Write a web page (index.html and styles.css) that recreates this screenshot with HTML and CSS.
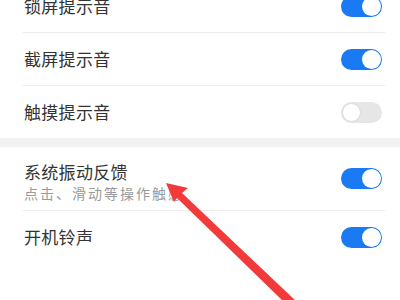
FILE: index.html
```html
<!DOCTYPE html>
<html lang="zh">
<head>
<meta charset="utf-8">
<link rel="stylesheet" href="styles.css">
</head>
<body>
<div class="page">
  <div class="group first">
    <div class="row">
      <span class="title">锁屏提示音</span>
      <span class="toggle on"></span>
    </div>
    <div class="row">
      <span class="title">截屏提示音</span>
      <span class="toggle on"></span>
    </div>
    <div class="row last">
      <span class="title">触摸提示音</span>
      <span class="toggle off"></span>
    </div>
  </div>
  <div class="band"></div>
  <div class="group">
    <div class="row tall">
      <div class="texts">
        <span class="title">系统振动反馈</span>
        <span class="sub">点击、滑动等操作触感</span>
      </div>
      <span class="toggle on"></span>
    </div>
    <div class="row last">
      <span class="title">开机铃声</span>
      <span class="toggle on"></span>
    </div>
  </div>
</div>
<svg class="arrow" width="400" height="300" viewBox="0 0 400 300">
  <polygon points="166,183 188,188 182,193 297,302 284,302 177,198 174,202" fill="#f23a3a"/>
</svg>
</body>
</html>
```
FILE: styles.css
```css
html, body {
  margin: 0;
  padding: 0;
  background: #ffffff;
  width: 400px;
  height: 300px;
  overflow: hidden;
}
body {
  position: relative;
  font-family: "Noto Sans CJK SC", "Noto Sans", sans-serif;
}
.page {
  display: flex;
  flex-direction: column;
}
.group {
  display: flex;
  flex-direction: column;
}
.group.first {
  margin-top: -20px;
}
.row {
  display: flex;
  align-items: center;
  justify-content: space-between;
  height: 52px;
  margin: 0 15px 0 23px;
  padding: 0 3px 0 1px;
  border-bottom: 1px solid #ececec;
}
.row.last {
  border-bottom: none;
}
.row.tall {
  height: 63px;
}
.texts {
  display: flex;
  flex-direction: column;
  padding-top: 6px;
}
.title {
  font-size: 17px;
  line-height: 22px;
  color: #333333;
  letter-spacing: 0.3px;
}
.sub {
  font-size: 14px;
  line-height: 20px;
  color: #9a9a9a;
  letter-spacing: 2px;
}
.band {
  height: 9px;
  background: #f2f2f2;
}
.toggle {
  position: relative;
  width: 41px;
  height: 21px;
  border-radius: 11px;
  box-sizing: border-box;
}
.toggle::after {
  content: "";
  position: absolute;
  top: 1px;
  width: 19px;
  height: 19px;
  border-radius: 50%;
  background: #ffffff;
  box-sizing: border-box;
}
.toggle.on {
  background: #1a7af3;
}
.toggle.on::after {
  right: 1px;
}
.toggle.off {
  background: #e6e6e6;
}
.toggle.off::after {
  left: 1px;
  border: 1px solid #dcdcdc;
}
.arrow {
  position: absolute;
  left: 0;
  top: 0;
}
```
